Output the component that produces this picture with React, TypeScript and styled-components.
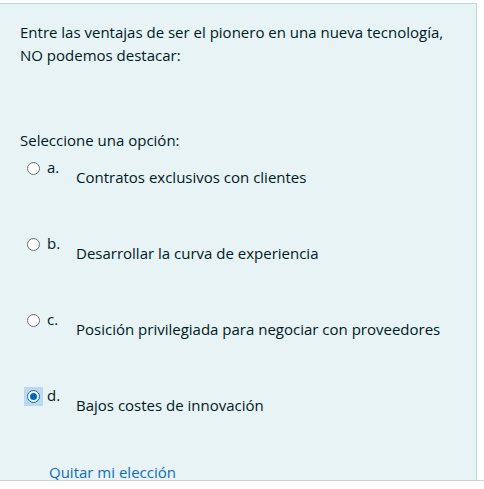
import React, { useState } from 'react';
import styled, { createGlobalStyle } from 'styled-components';

const GlobalStyle = createGlobalStyle`
  html, body {
    margin: 0;
    padding: 0;
    background: #fff;
  }
  body {
    font-family: "Open Sans", "Noto Sans", "Liberation Sans", sans-serif;
    font-size: 15px;
    color: #001a1e;
  }
`;

const Viewport = styled.div`
  height: 481px;
  overflow: hidden;
  border-bottom: 1px solid #cfd4d6;
  padding-top: 3px;
  box-sizing: border-box;
`;

const Formulation = styled.div`
  width: 477px;
  box-sizing: border-box;
  min-height: 520px;
  background: #e7f3f5;
  border: 1px solid #b8dce2;
  border-left: none;
  padding: 17px 20px 20px 20px;
  line-height: 22.5px;
`;

const QuestionText = styled.p`
  margin: 0;
`;

const Prompt = styled.div`
  margin-top: 63px;
`;

const AnswerList = styled.div`
  margin-top: 4px;
  display: flex;
  flex-direction: column;
`;

const Option = styled.label`
  display: flex;
  align-items: flex-start;
  height: 76px;
  padding-left: 4px;
  cursor: pointer;
`;

const RadioFrame = styled.span<{ $focused: boolean }>`
  width: 19px;
  height: 19px;
  margin-top: 3px;
  display: flex;
  align-items: center;
  justify-content: center;
  background: ${(p) => (p.$focused ? '#bcd8f2' : 'transparent')};
`;

const Radio = styled.span<{ $checked: boolean }>`
  width: 13px;
  height: 13px;
  box-sizing: border-box;
  border-radius: 50%;
  border: 1px solid ${(p) => (p.$checked ? '#0067c0' : '#6f6f6f')};
  background: #fff;
  display: flex;
  align-items: center;
  justify-content: center;

  &::after {
    content: '';
    width: 7px;
    height: 7px;
    border-radius: 50%;
    background: ${(p) => (p.$checked ? '#0067c0' : 'transparent')};
  }
`;

const Letter = styled.span`
  margin-left: 4px;
  width: 29px;
`;

const AnswerText = styled.span`
  margin-top: 10px;
`;

const ClearLink = styled.a`
  display: inline-block;
  margin-left: 29px;
  margin-top: 1px;
  color: #0f6cbf;
  text-decoration: none;
`;

const options = [
  'Contratos exclusivos con clientes',
  'Desarrollar la curva de experiencia',
  'Posición privilegiada para negociar con proveedores',
  'Bajos costes de innovación',
];

const letters = ['a.', 'b.', 'c.', 'd.'];

export default function App() {
  const [selected, setSelected] = useState(3);

  return (
    <>
      <GlobalStyle />
      <Viewport>
        <Formulation>
          <QuestionText>
            Entre las ventajas de ser el pionero en una nueva tecnología,
            <br />
            NO podemos destacar:
          </QuestionText>
          <Prompt>Seleccione una opción:</Prompt>
          <AnswerList>
            {options.map((text, i) => (
              <Option key={text} onClick={() => setSelected(i)}>
                <RadioFrame $focused={selected === i}>
                  <Radio $checked={selected === i} />
                </RadioFrame>
                <Letter>{letters[i]}</Letter>
                <AnswerText>{text}</AnswerText>
              </Option>
            ))}
          </AnswerList>
          <ClearLink href="#" onClick={(e) => { e.preventDefault(); setSelected(-1); }}>
            Quitar mi elección
          </ClearLink>
        </Formulation>
      </Viewport>
    </>
  );
}
